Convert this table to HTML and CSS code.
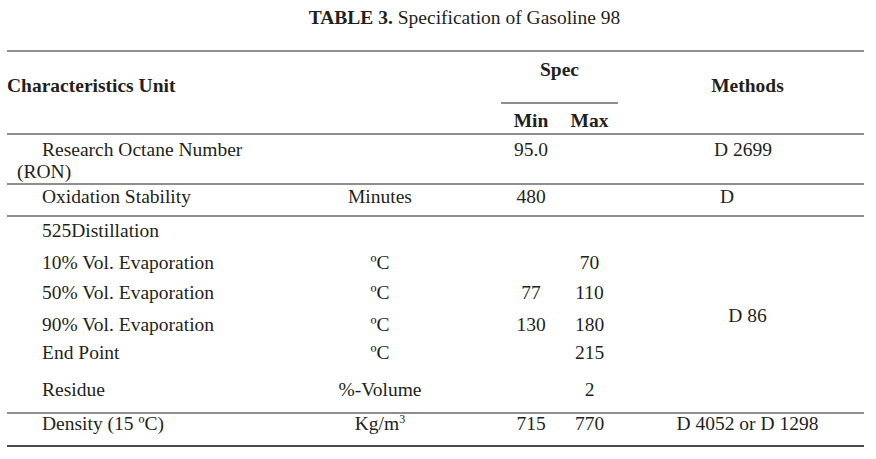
FILE: index.html
```html
<!DOCTYPE html>
<html>
<head>
<meta charset="utf-8">
<link rel="stylesheet" href="styles.css">
</head>
<body>
<div class="title"><b>TABLE 3.</b> Specification of Gasoline 98</div>
<div class="tbl">
  <div class="sec head">
    <div class="c1 h-char">Characteristics Unit</div>
    <div class="spec">Spec</div>
    <div class="meth h-meth">Methods</div>
    <div class="mn h-min">Min</div>
    <div class="mx h-max">Max</div>
  </div>
  <div class="sec ron">
    <div class="c1 ron-name">Research Octane Number<br>(RON)</div>
    <div class="mn">95.0</div>
    <div class="meth m-2699">D 2699</div>
  </div>
  <div class="sec oxi">
    <div class="c1 ind">Oxidation Stability</div>
    <div class="unit">Minutes</div>
    <div class="mn">480</div>
    <div class="meth m-d">D</div>
  </div>
  <div class="sec dist">
    <div class="c1 ind r1">525Distillation</div>

    <div class="c1 ind r2">10% Vol. Evaporation</div>
    <div class="unit r2">ºC</div>
    <div class="mx r2">70</div>

    <div class="c1 ind r3">50% Vol. Evaporation</div>
    <div class="unit r3">ºC</div>
    <div class="mn r3">77</div>
    <div class="mx r3">110</div>

    <div class="c1 ind r4">90% Vol. Evaporation</div>
    <div class="unit r4">ºC</div>
    <div class="mn r4">130</div>
    <div class="mx r4">180</div>

    <div class="c1 ind r5">End Point</div>
    <div class="unit r5">ºC</div>
    <div class="mx r5">215</div>

    <div class="c1 ind r6">Residue</div>
    <div class="unit r6">%-Volume</div>
    <div class="mx r6">2</div>

    <div class="meth m-86">D 86</div>
  </div>
  <div class="sec dens">
    <div class="c1 ind">Density (15 ºC)</div>
    <div class="unit">Kg/m<sup>3</sup></div>
    <div class="mn">715</div>
    <div class="mx">770</div>
    <div class="meth">D 4052 or D 1298</div>
  </div>
</div>
</body>
</html>
```

FILE: styles.css
```css
html, body {
  margin: 0;
  padding: 0;
  background: #ffffff;
}
body {
  font-family: "Liberation Serif", "Times New Roman", serif;
  font-size: 19.5px;
  line-height: 20px;
  color: #231f20;
}
.title {
  height: 50px;
  box-sizing: border-box;
  padding-top: 8px;
  padding-left: 53px;
  text-align: center;
}
.tbl {
  margin-left: 7px;
  width: 857px;
  border-bottom: 2px solid #4a4a4a;
}
.sec {
  display: grid;
  grid-template-columns: 293px 160px 41px 60px 57px 246px;
  border-top: 2px solid #8e8e8e;
}
.c1 { grid-column: 1; }
.unit { grid-column: 2; text-align: center; }
.mn { grid-column: 4; text-align: center; }
.mx { grid-column: 5; text-align: center; }
.meth { grid-column: 6; text-align: center; padding-left: 13px; }
.ind { padding-left: 35px; }

/* header */
.head {
  grid-template-rows: 52px 29px;
  font-weight: bold;
}
.h-char { grid-row: 1 / 3; padding-top: 24px; }
.spec {
  grid-column: 4 / 6;
  grid-row: 1;
  text-align: center;
  padding-top: 8px;
  border-bottom: 2px solid #8e8e8e;
  box-sizing: border-box;
  height: 52px;
}
.h-meth { grid-row: 1 / 3; padding-top: 24px; }
.h-min, .h-max { grid-row: 2; padding-top: 7px; }

/* RON */
.ron { height: 48px; line-height: 22px; }
.ron > div { padding-top: 4px; }
.ron-name { padding-left: 10px; text-indent: 25px; }
.m-2699 { padding-right: 9px; }

/* oxidation */
.oxi { height: 30px; }
.oxi > div { padding-top: 2px; }
.m-d { text-align: left; padding-left: 102px; }

/* distillation */
.dist {
  grid-template-rows: 32px 30px 32px 28px 37px 36px;
}
.dist > div { padding-top: 4px; }
.r1 { grid-row: 1; }
.r2 { grid-row: 2; }
.r3 { grid-row: 3; }
.r4 { grid-row: 4; }
.r5 { grid-row: 5; }
.r6 { grid-row: 6; }
.dist > .m-86 { grid-row: 1 / 7; padding-top: 89px; }

/* density */
.dens { height: 31px; }
sup {
  font-size: 12px;
  line-height: 0;
  vertical-align: 7px;
}
```
